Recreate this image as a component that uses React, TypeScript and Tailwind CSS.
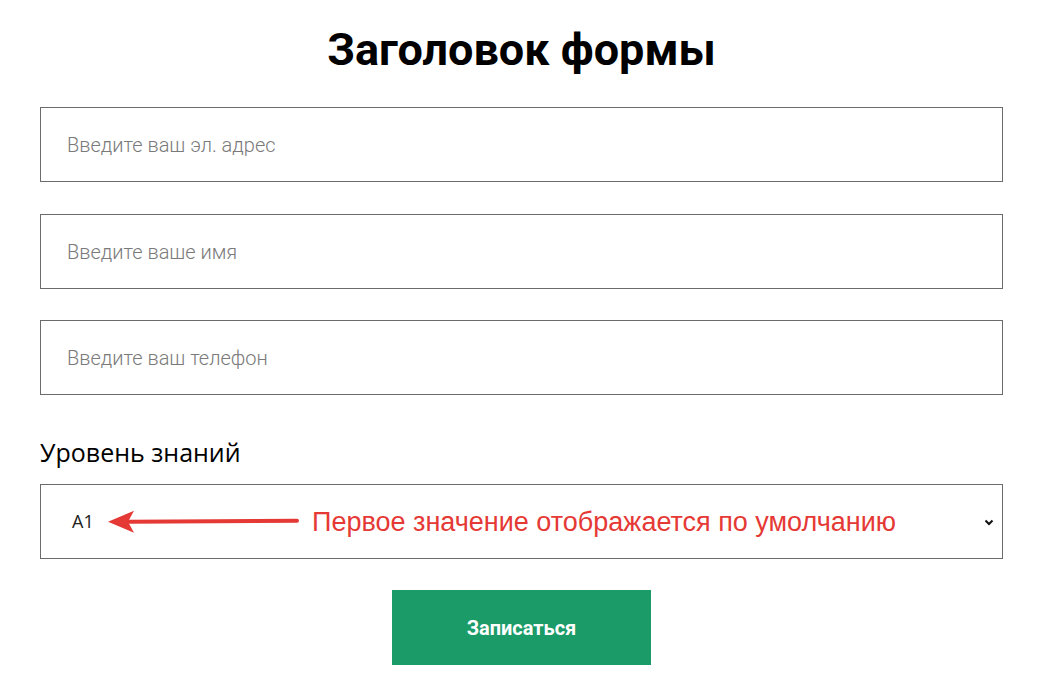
export default function App() {
  return (
    <main className="min-h-screen bg-white">
      <div className="ml-[40px] w-[963px] pt-[21px] font-['Roboto',sans-serif]">
        <h1 className="text-center text-[45px] font-bold leading-[58px] text-black">Заголовок формы</h1>

        <div className="mt-[28px] flex flex-col">
          <input
            type="text"
            placeholder="Введите ваш эл. адрес"
            className="h-[75px] w-full border border-[#6b6b6b] px-[26px] text-[20px] font-light text-black outline-none placeholder:text-[#7a7a7a]"
          />
          <input
            type="text"
            placeholder="Введите ваше имя"
            className="mt-[32px] h-[75px] w-full border border-[#6b6b6b] px-[26px] text-[20px] font-light text-black outline-none placeholder:text-[#7a7a7a]"
          />
          <input
            type="text"
            placeholder="Введите ваш телефон"
            className="mt-[31px] h-[75px] w-full border border-[#6b6b6b] px-[26px] text-[20px] font-light text-black outline-none placeholder:text-[#7a7a7a]"
          />
        </div>

        <div className="mt-[37px] font-['Open_Sans',sans-serif] text-[25px] leading-[40px] text-black">Уровень знаний</div>

        <div className="relative mt-[12px] flex h-[75px] items-center border border-[#6b6b6b] pl-[31px] pr-[8px]">
          <span className="font-['Open_Sans',sans-serif] text-[18px] text-[#222]">A1</span>
          <svg className="ml-auto" width="10" height="8" viewBox="0 0 10 8">
            <path d="M1.5 2.5 L5 6 L8.5 2.5" fill="none" stroke="#111" strokeWidth="2" />
          </svg>

          <div className="absolute left-[66px] top-1/2 flex -translate-y-1/2 items-center">
            <svg width="194" height="28" viewBox="0 0 194 28">
              <path d="M1 14 L27 3 L21 14 L27 25 Z" fill="#e53935" />
              <path d="M22 14 L190 13" stroke="#e53935" strokeWidth="4" strokeLinecap="round" />
            </svg>
            <span className="ml-[11px] font-['Liberation_Sans',Arial,sans-serif] text-[27px] text-[#e53935]">
              Первое значение отображается по умолчанию
            </span>
          </div>
        </div>

        <div className="mt-[31px] flex justify-center">
          <button
            type="button"
            className="h-[75px] w-[259px] bg-[#1a9b68] text-[20px] font-bold text-white"
          >
            Записаться
          </button>
        </div>
      </div>
    </main>
  );
}
